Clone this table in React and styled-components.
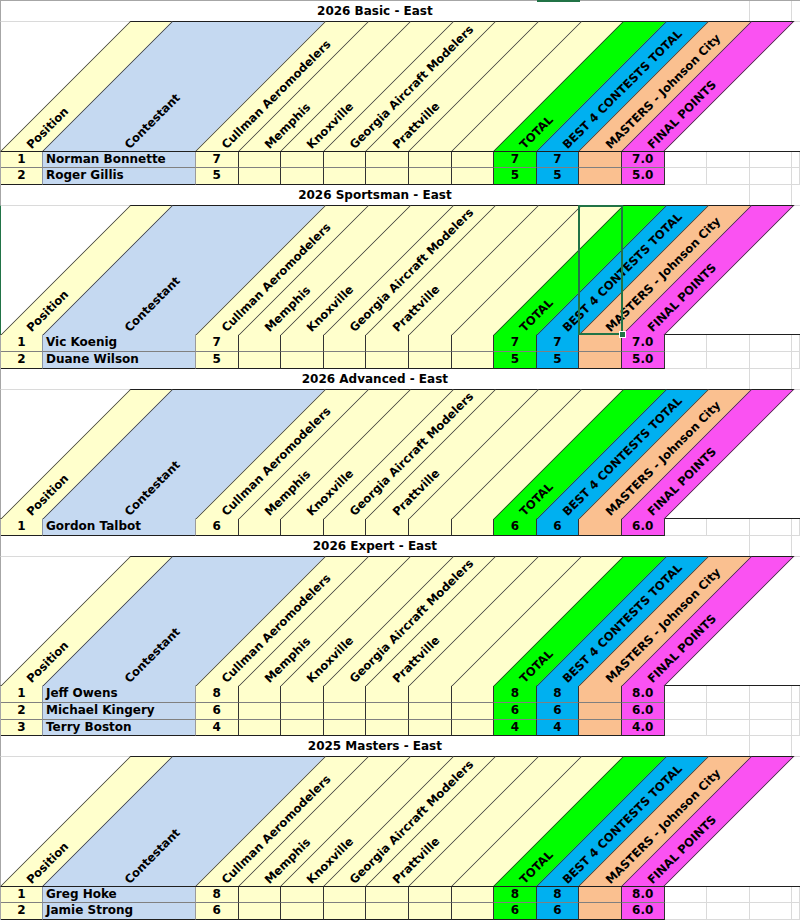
import React from "react";
import styled, { createGlobalStyle } from "styled-components";

// Colours
const YELLOW = "#FFFFCC";
const BLUE = "#C5D9F1";
const GREEN = "#00FF00";
const CYAN = "#00B0F0";
const PEACH = "#FAC090";
const MAGENTA = "#FA52F2";
const GRID = "#dadada";
const EXCEL = "#217346";

const COL = 42.6;

const columns = [
    { key: "pos", width: 42, label: "Position", bg: YELLOW, line: "#8a94a6" },
    { key: "name", width: 153, label: "Contestant", bg: BLUE, line: "#9a9a9a", align: "left" },
    { key: "cullman", width: COL, label: "Cullman Aeromodelers", bg: YELLOW },
    { key: "memphis", width: COL, label: "Memphis", bg: YELLOW },
    { key: "knoxville", width: COL, label: "Knoxville", bg: YELLOW },
    { key: "georgia", width: COL, label: "Georgia Aircraft Modelers", bg: YELLOW },
    { key: "prattville", width: COL, label: "Prattville", bg: YELLOW },
    { key: "blank1", width: COL, label: "", bg: YELLOW },
    { key: "blank2", width: COL, label: "", bg: YELLOW },
    { key: "total", width: COL, label: "TOTAL", bg: GREEN },
    { key: "best", width: COL, label: "BEST 4 CONTESTS TOTAL", bg: CYAN },
    { key: "masters", width: COL, label: "MASTERS - Johnson City", bg: PEACH },
    { key: "final", width: COL, label: "FINAL POINTS", bg: MAGENTA, last: true },
];

const sections = [
    {
        title: "2026 Basic - East",
        rows: [
            [1, "Norman Bonnette", 7],
            [2, "Roger Gillis", 5],
        ],
    },
    {
        title: "2026 Sportsman - East",
        selected: "masters",
        rows: [
            [1, "Vic Koenig", 7],
            [2, "Duane Wilson", 5],
        ],
    },
    {
        title: "2026 Advanced - East",
        rows: [[1, "Gordon Talbot", 6]],
    },
    {
        title: "2026 Expert - East",
        rows: [
            [1, "Jeff Owens", 8],
            [2, "Michael Kingery", 6],
            [3, "Terry Boston", 4],
        ],
    },
    {
        title: "2025 Masters - East",
        rows: [
            [1, "Greg Hoke", 8],
            [2, "Jamie Strong", 6],
        ],
    },
];

const GlobalStyle = createGlobalStyle`
    html, body {
        margin: 0;
        padding: 0;
        background: #fff;
    }
    body {
        font-family: "DejaVu Sans", Verdana, sans-serif;
        color: #000;
        overflow: hidden;
    }
`;

const Sheet = styled.div`
    width: 800px;
    height: 920px;
    overflow: hidden;
    background: #fff;
`;

const TopRule = styled.div`
    position: relative;
    height: 1px;
    background: #a6a6a6;
`;

// selected column marker in the (cropped) column header strip
const ColumnMark = styled.div`
    position: absolute;
    top: 0;
    left: 537px;
    width: 43px;
    height: 2px;
    background: ${EXCEL};
`;

const Row = styled.div`
    display: flex;
    box-sizing: border-box;
    border-left: 1px solid ${(p) => (p.$mark ? EXCEL : "#a6a6a6")};
    background: #fff;
`;

const TitleRow = styled(Row)`
    height: 20px;
`;

const TitleText = styled.div`
    flex: 0 0 748.8px;
    box-sizing: border-box;
    border-right: 1px solid ${GRID};
    text-align: center;
    font-size: 12px;
    font-weight: bold;
    line-height: 20px;
    white-space: nowrap;
`;

const GridGap = styled.div`
    flex: 0 0 ${(p) => p.$w}px;
    box-sizing: border-box;
    border-right: 1px solid ${GRID};
`;

const HeaderRow = styled(Row)`
    height: 130.5px;
    border-top: 1px solid ${GRID};
    border-bottom: 1px solid #1f1f1f;
`;

const HeaderCell = styled.div`
    position: relative;
    flex: 0 0 ${(p) => p.$w}px;
`;

const Slant = styled.div`
    position: absolute;
    top: -1px;
    left: 0;
    right: 0;
    bottom: 0;
    box-sizing: border-box;
    background: ${(p) => p.$bg};
    border-top: 1px solid #1f1f1f;
    border-left: 1px solid #2a2a2a;
    border-right: ${(p) => (p.$last ? "1px solid #2a2a2a" : "none")};
    transform-origin: left bottom;
    transform: skewX(-45deg);
`;

const Label = styled.span`
    position: absolute;
    left: calc(50% + 11px);
    bottom: 0;
    z-index: 1;
    font-size: 11.6px;
    font-weight: bold;
    line-height: 12px;
    white-space: nowrap;
    transform-origin: left bottom;
    transform: rotate(-45deg);
`;

const Selection = styled.div`
    position: absolute;
    top: -1px;
    left: -1px;
    right: -1px;
    bottom: -1px;
    z-index: 2;
    border: 2px solid ${EXCEL};

    &::after {
        content: "";
        position: absolute;
        right: -5px;
        bottom: -5px;
        width: 5px;
        height: 5px;
        background: ${EXCEL};
        border: 1px solid #fff;
    }
`;

const DataRow = styled(Row)`
    height: 16.67px;
`;

const Cell = styled.div`
    flex: 0 0 ${(p) => p.$w}px;
    box-sizing: border-box;
    background: ${(p) => p.$bg};
    border-right: 1px solid ${(p) => p.$line};
    border-bottom: 1px solid ${(p) => p.$under};
    padding-left: ${(p) => (p.$align === "left" ? "3px" : "0")};
    text-align: ${(p) => p.$align};
    font-size: 12px;
    font-weight: bold;
    line-height: 15.67px;
    white-space: nowrap;
    overflow: hidden;
`;

const EmptyCell = styled.div`
    flex: ${(p) => (p.$w ? `0 0 ${p.$w}px` : "1 1 auto")};
    box-sizing: border-box;
    border-right: 1px solid ${GRID};
    border-bottom: 1px solid ${GRID};
`;

const cellValue = (key, row) => {
    const [pos, name, score] = row;
    switch (key) {
        case "pos":
            return pos;
        case "name":
            return name;
        case "cullman":
        case "total":
        case "best":
            return score;
        case "final":
            return score.toFixed(1);
        default:
            return "";
    }
};

const Section = ({ section }) => {
    const { title, rows, selected } = section;

    return (
        <>
            <TitleRow>
                <TitleText>{title}</TitleText>
                <GridGap $w={COL} />
            </TitleRow>
            <HeaderRow $mark={!!selected}>
                {columns.map((col) => (
                    <HeaderCell key={col.key} $w={col.width}>
                        <Slant $bg={col.bg} $last={col.last} />
                        {col.label && <Label>{col.label}</Label>}
                        {selected === col.key && <Selection />}
                    </HeaderCell>
                ))}
            </HeaderRow>
            {rows.map((row, i) => {
                const under = i === rows.length - 1 ? "#1f1f1f" : "#808080";
                return (
                    <DataRow key={row[0]}>
                        {columns.map((col) => (
                            <Cell
                                key={col.key}
                                $w={col.width}
                                $bg={col.bg}
                                $line={col.line || "#333"}
                                $under={under}
                                $align={col.align || "center"}
                            >
                                {cellValue(col.key, row)}
                            </Cell>
                        ))}
                        <EmptyCell $w={COL} />
                        <EmptyCell $w={COL} />
                        <EmptyCell $w={COL} />
                        <EmptyCell />
                    </DataRow>
                );
            })}
        </>
    );
};

const App = () => {
    return (
        <>
            <GlobalStyle />
            <Sheet>
                <TopRule>
                    <ColumnMark />
                </TopRule>
                {sections.map((section) => (
                    <Section key={section.title} section={section} />
                ))}
            </Sheet>
        </>
    );
};

export default App;
